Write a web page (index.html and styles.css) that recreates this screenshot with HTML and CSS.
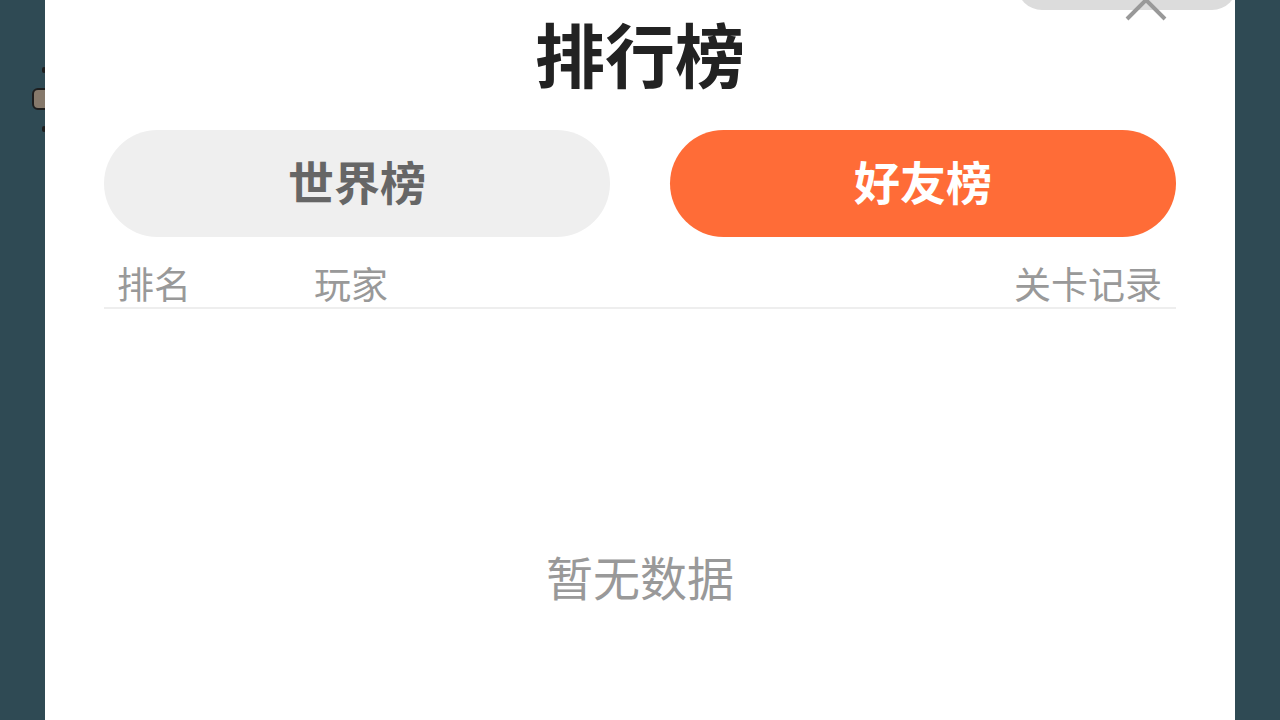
FILE: index.html
```html
<!DOCTYPE html>
<html lang="zh-CN">
<head>
    <meta charset="UTF-8">
    <meta name="viewport" content="width=device-width, initial-scale=1.0">
    <title>排行榜</title>
    <link rel="stylesheet" href="styles.css">
</head>
<body>
    <!-- 背景里露出来的一点游戏元素 -->
    <div class="scene">
        <span class="scene-dot top"></span>
        <span class="scene-block"></span>
        <span class="scene-dot bottom"></span>
    </div>

    <div class="modal">
        <div class="close-bar"></div>
        <button class="close-btn" aria-label="关闭">
            <svg width="44" height="44" viewBox="0 0 44 44">
                <path d="M3 3 L41 41 M41 3 L3 41" stroke="#999" stroke-width="4" fill="none"/>
            </svg>
        </button>

        <h1 class="title">排行榜</h1>

        <div class="tabs">
            <div class="tab">世界榜</div>
            <div class="tab active">好友榜</div>
        </div>

        <div class="table-head">
            <span class="col-rank">排名</span>
            <span class="col-player">玩家</span>
            <span class="col-record">关卡记录</span>
        </div>

        <div class="empty">暂无数据</div>
    </div>
</body>
</html>
```

FILE: styles.css
```css
/* 基础样式 */
* {
    margin: 0;
    padding: 0;
    box-sizing: border-box;
    font-family: "Noto Sans CJK SC", "Noto Sans", sans-serif;
}

body {
    width: 1280px;
    height: 720px;
    overflow: hidden;
    background-color: #2f4a54;
    position: relative;
}

/* 背景元素 */
.scene {
    position: absolute;
    left: 30px;
    top: 60px;
    width: 20px;
    height: 80px;
}

.scene-block {
    position: absolute;
    left: 2px;
    top: 28px;
    width: 20px;
    height: 22px;
    background-color: #86796b;
    border: 2px solid #1e1e1e;
    border-radius: 6px;
}

.scene-dot {
    position: absolute;
    left: 12px;
    width: 4px;
    height: 6px;
    background-color: #1e1e1e;
    border-radius: 2px;
}

.scene-dot.top {
    top: 7px;
}

.scene-dot.bottom {
    top: 66px;
}

/* 弹窗 */
.modal {
    position: relative;
    margin-left: 45px;
    width: 1190px;
    height: 720px;
    background-color: #fff;
    padding: 0 59px;
}

.close-bar {
    position: absolute;
    right: -2px;
    top: -40px;
    width: 220px;
    height: 50px;
    border-radius: 25px;
    background-color: #dcdcdc;
}

.close-btn {
    position: absolute;
    left: 1079px;
    top: -22px;
    width: 44px;
    height: 44px;
    border: none;
    background: none;
}

.close-btn svg {
    display: block;
}

/* 标题 */
.title {
    padding-top: 18px;
    font-size: 70px;
    line-height: 70px;
    font-weight: bold;
    color: #222;
    text-align: center;
    margin-bottom: 42px;
}

/* 切换按钮 */
.tabs {
    display: flex;
    gap: 60px;
}

.tab {
    flex: 1;
    height: 107px;
    padding-bottom: 7px;
    border-radius: 54px;
    background-color: #efefef;
    color: #666;
    font-size: 46px;
    font-weight: bold;
    display: flex;
    justify-content: center;
    align-items: center;
}

.tab.active {
    background-color: #ff6c37;
    color: #fff;
}

/* 表头 */
.table-head {
    display: flex;
    margin-top: 28px;
    padding: 0 14px 5px 13px;
    border-bottom: 2px solid #eeeeee;
    font-size: 37px;
    line-height: 37px;
    color: #999;
}

.col-rank {
    width: 197px;
}

.col-player {
    flex: 1;
}

/* 空状态 */
.empty {
    padding-top: 243px;
    text-align: center;
    font-size: 47px;
    line-height: 47px;
    color: #999;
}
```
